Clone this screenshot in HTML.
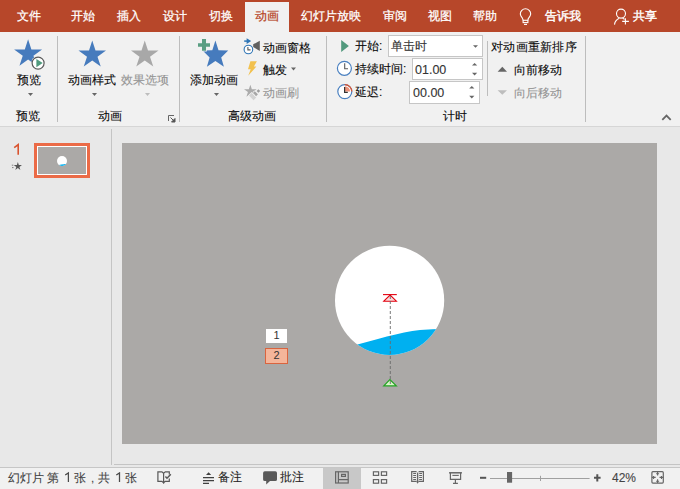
<!DOCTYPE html>
<html><head><meta charset="utf-8">
<style>
*{margin:0;padding:0;box-sizing:border-box}
html,body{width:680px;height:489px;overflow:hidden;background:#E8E8E8;font-family:"Liberation Sans",sans-serif;}
#tabs{position:absolute;left:0;top:0;width:680px;height:32px;background:#B7472A;}
.t{position:absolute;top:9px;font-size:12px;color:#fff;line-height:14px;white-space:nowrap;}
#act{position:absolute;left:245px;top:2px;width:44px;height:30px;background:#F1F1F1;}
#ribbon{position:absolute;left:0;top:32px;width:680px;height:95px;background:#F1F1F1;border-bottom:1px solid #D6D6D6;}
.r{position:absolute;font-size:12px;color:#0a0a0a;line-height:14px;white-space:nowrap;}
.g{color:#949494;}
.box{position:absolute;background:#fff;border:1px solid #C6C6C6;}
#pane{position:absolute;left:0;top:127px;width:680px;height:340px;background:#E8E8E8;}
#status{position:absolute;left:0;top:467px;width:680px;height:22px;background:#F1F1F1;border-top:1px solid #C6C6C6;}
.s{position:absolute;font-size:12px;color:#444;line-height:14px;white-space:nowrap;}
svg.ov{position:absolute;left:0;top:0;}
.r,.s{-webkit-text-stroke:0.1px currentColor;}
.t{-webkit-text-stroke:0.25px currentColor;}
</style></head><body>
<div id="tabs">
  <div class="t" style="left:17px">文件</div>
  <div class="t" style="left:71px">开始</div>
  <div class="t" style="left:117px">插入</div>
  <div class="t" style="left:163px">设计</div>
  <div class="t" style="left:209px">切换</div>
  <div id="act"></div>
  <div class="t" style="left:255px;color:#B7472A">动画</div>
  <div class="t" style="left:301px">幻灯片放映</div>
  <div class="t" style="left:383px">审阅</div>
  <div class="t" style="left:428px">视图</div>
  <div class="t" style="left:473px">帮助</div>
  <div class="t" style="left:545px;-webkit-text-stroke:0.4px #fff">告诉我</div>
  <div class="t" style="left:633px;-webkit-text-stroke:0.4px #fff">共享</div>
</div>
<div id="ribbon"></div>
<div id="pane"></div>
<div id="status"></div>

<!-- ribbon text -->
<div class="r" style="left:17px;top:73px">预览</div>
<div class="r" style="left:16px;top:109px">预览</div>
<div class="r" style="left:68px;top:73px">动画样式</div>
<div class="r g" style="left:121px;top:73px">效果选项</div>
<div class="r" style="left:98px;top:109px">动画</div>
<div class="r" style="left:190px;top:73px">添加动画</div>
<div class="r" style="left:263px;top:41px">动画窗格</div>
<div class="r" style="left:263px;top:62.5px">触发</div>
<div class="r g" style="left:263px;top:85.5px">动画刷</div>
<div class="r" style="left:228px;top:109px">高级动画</div>
<div class="r" style="left:355px;top:39px">开始:</div>
<div class="r" style="left:355px;top:62px">持续时间:</div>
<div class="r" style="left:355px;top:85px">延迟:</div>
<div class="box" style="left:388px;top:35px;width:95px;height:22px"></div>
<div class="r" style="left:391px;top:39px;color:#333">单击时</div>
<div class="box" style="left:412px;top:58px;width:71px;height:22px"></div>
<div class="r" style="left:415px;top:63px;color:#333;font-size:12.5px">01.00</div>
<div class="box" style="left:409px;top:81px;width:71px;height:23px"></div>
<div class="r" style="left:413px;top:86px;color:#333;font-size:12.5px">00.00</div>
<div class="r" style="left:443px;top:109px">计时</div>
<div class="r" style="left:491px;top:40px;letter-spacing:0.3px">对动画重新排序</div>
<div class="r" style="left:514px;top:63px">向前移动</div>
<div class="r g" style="left:514px;top:86px">向后移动</div>


<!-- pane -->
<div style="position:absolute;left:111px;top:129px;width:1px;height:336px;background:#C4C4C4"></div><div style="position:absolute;left:114px;top:464px;width:566px;height:1px;background:#C4C4C4"></div>

<div style="position:absolute;left:34px;top:143px;width:56px;height:35px;border:3px solid #EB6B47;background:#fff;"></div>
<div style="position:absolute;left:38px;top:147px;width:48px;height:27px;background:#ABA9A7;"></div>
<div style="position:absolute;left:122px;top:143px;width:535px;height:301px;background:#ABA9A7;"></div>
<div style="position:absolute;left:266px;top:329px;width:21px;height:14px;background:#fff;"></div>
<div style="position:absolute;left:265px;top:348px;width:23px;height:16px;background:#F4B59A;border:1px solid #D9643F"></div>
<div style="position:absolute;left:266px;top:329px;width:21px;font-size:11px;line-height:13px;text-align:center;color:#333">1</div>
<div style="position:absolute;left:265px;top:349px;width:23px;font-size:11px;line-height:13px;text-align:center;color:#333">2</div>
<svg class="ov" width="680" height="489" viewBox="0 0 680 489">
  <path d="M14.2 147.6 L18.2 144.6 V154.7" fill="none" stroke="#D9542F" stroke-width="1.6" stroke-linejoin="miter"/><path d="M11.8 165.2h1.5M12 167.6h1.5" stroke="#777" stroke-width="0.9"/>
  <path d="M17.85 162.10 L18.82 165.07 L21.94 165.07 L19.41 166.91 L20.38 169.88 L17.85 168.04 L15.32 169.88 L16.29 166.91 L13.76 165.07 L16.88 165.07Z" fill="#555"/>
  <defs><clipPath id="cc"><circle cx="389.6" cy="300.4" r="54.6"/></clipPath>
  <clipPath id="tc"><circle cx="62" cy="161" r="5"/></clipPath></defs>
  <circle cx="389.6" cy="300.4" r="54.6" fill="#fff"/>
  <path d="M350 346.5 C375 340 400 332 420 330 C430 329.3 440 329 450 328.7 L450 360 L350 360Z" fill="#00B0F0" clip-path="url(#cc)"/>
  <circle cx="62" cy="161" r="5" fill="#fff"/>
  <path d="M56 165.8 C59 165 62 164.2 68 163.6 L68 168 L56 168Z" fill="#00B0F0" clip-path="url(#tc)"/>
  
  <path d="M383.8 301.2 L390.1 295 L396.4 301.2Z" fill="#F3C4C4" fill-opacity="0.6" stroke="#E3000F" stroke-width="1.1"/><path d="M383 294.6h13.8" stroke="#E3000F" stroke-width="1.1"/>
  <path d="M383.8 385.9 L389.9 379.6 L396.3 385.9Z" fill="#D9F7C9" stroke="#22A322" stroke-width="1.2"/>
  <path d="M390.3 296V386" stroke="#6A6A6A" stroke-width="0.9" stroke-dasharray="3 2"/>
</svg>

<!-- status text -->
<div class="s" style="left:8px;top:471px;font-size:11.5px">幻灯片</div>
<div class="s" style="left:47px;top:471px;font-size:11.5px">第</div>
<div class="s" style="left:74px;top:471px;font-size:11.5px">张</div>
<div class="s" style="left:91px;top:471px;font-size:11.5px">,</div>
<div class="s" style="left:98px;top:471px;font-size:11.5px">共</div>
<div class="s" style="left:125px;top:471px;font-size:11.5px">张</div>
<div class="s" style="left:218px;top:470px;color:#262626">备注</div>
<div class="s" style="left:280px;top:470px;color:#262626">批注</div>
<div class="s" style="left:612px;top:471px">42%</div>

<svg class="ov" width="680" height="489" viewBox="0 0 680 489">
  <!-- tab bar icons -->
  <path d="M522.9 18.9 C521.6 17.2 520.3 15.6 520.3 14 A5.2 5.2 0 0 1 530.7 14 C530.7 15.6 529.4 17.2 528.1 18.9 V20.2" fill="none" stroke="#fff" stroke-width="1.1"/>
  <path d="M522.9 18.9V20.2" stroke="#fff" stroke-width="1.1"/>
  <rect x="523.1" y="20.3" width="4.8" height="2.3" fill="none" stroke="#fff" stroke-width="1.1"/>
  <path d="M524 24.4h3" stroke="#fff" stroke-width="1.1"/>
  <circle cx="621" cy="13.6" r="4.5" fill="none" stroke="#fff" stroke-width="1.1"/>
  <path d="M614.5 24.6 C614.8 21.5 616.8 19.3 619.3 18.2 M622.5 18.2 C623.3 18.5 624 18.9 624.6 19.4" fill="none" stroke="#fff" stroke-width="1.1"/>
  <path d="M625.4 18.2v6.4M622.2 21.4h6.7" stroke="#fff" stroke-width="1.1"/>

  <!-- separators -->
  <g stroke="#BDBDBD" stroke-width="1">
    <path d="M57.5 36V122M179.5 36V122M326.5 36V122M585.5 36V122M487.5 41V96"/>
  </g>
  <!-- preview -->
  <path d="M28.10 39.30 L31.40 49.42 L42.08 49.42 L33.44 55.68 L36.74 65.80 L28.10 59.55 L19.46 65.80 L22.76 55.68 L14.12 49.42 L24.80 49.42Z" fill="#467BBD"/>
  <circle cx="38.1" cy="63.1" r="6.9" fill="#F1F1F1"/>
  <circle cx="38.1" cy="63.1" r="6" fill="#fff" stroke="#5A5A5A" stroke-width="1.2"/>
  <path d="M36.4 58.9 L42.7 63.1 L36.4 67.3 Z" fill="#4F9A7D"/>
  <path d="M28 93h5l-2.5 3z" fill="#666"/>
  <!-- anim styles -->
  <path d="M92.25 40.60 L95.50 50.53 L106.00 50.53 L97.50 56.67 L100.75 66.60 L92.25 60.46 L83.75 66.60 L87.00 56.67 L78.50 50.53 L89.00 50.53Z" fill="#467BBD"/>
  <path d="M144.75 40.60 L148.00 50.53 L158.50 50.53 L150.00 56.67 L153.25 66.60 L144.75 60.46 L136.25 66.60 L139.50 56.67 L131.00 50.53 L141.50 50.53Z" fill="#A8A8A8"/>
  <path d="M92 93h5l-2.5 3z" fill="#666"/>
  <path d="M145 93h5l-2.5 3z" fill="#BDBDBD"/>
  <path d="M168.5 121V115.5H174" fill="none" stroke="#666" stroke-width="1"/><path d="M170.5 117.5 L175 122 M175 118.5V122H171.5Z" fill="#555" stroke="#555" stroke-width="1"/>
  <!-- add animation -->
  <path d="M215.4 40.6 L218.5 50.3 L228.2 50.5 L221.2 57.6 L223.9 66.8 L215.4 61 L206.9 66.8 L209.6 57.6 L202.6 50.5 L212.3 50.3Z" fill="#467BBD"/>
  <path d="M202 39h4v4.2h4v3.6h-4v3.9h-4v-3.9h-4v-3.6h4z" fill="#5A9E82" stroke="#F1F1F1" stroke-width="1.6" paint-order="stroke"/>
  <path d="M214 93h5l-2.5 3z" fill="#666"/>
  <!-- anim pane icon -->
  <path d="M244.2 41.1h4" stroke="#2E75B6" stroke-width="1.5"/>
  <path d="M246.6 38.2 L251.2 41.1 L246.6 44Z" fill="#2E75B6"/>
  <circle cx="248.4" cy="49.5" r="4.3" fill="#fff" stroke="#2E75B6" stroke-width="1.1"/>
  <path d="M247.9 46.9V49.9H250.5" fill="none" stroke="#595959" stroke-width="1.1"/>
  <path d="M253.2 44.3 L259.8 40.8 L259.8 51 L253.2 47.1Z" fill="#5F5F5F"/>
  <!-- trigger -->
  <path d="M250.4 61.2 L256.9 61.2 L253.9 66.5 L256.4 66.5 L248.2 75.8 L250.7 69.2 L248 69.2 Z" fill="#F2C14E"/>
  <path d="M291 67.5h5l-2.5 3z" fill="#666"/>
  <!-- anim painter -->
  <path d="M250.35 84.70 L251.85 89.28 L256.70 89.28 L252.78 92.11 L254.28 96.69 L250.35 93.86 L246.42 96.69 L247.92 92.11 L244.00 89.28 L248.85 89.28Z" fill="#ABABAB"/>
  <g transform="translate(255.3,94) rotate(-45)" stroke="#F1F1F1" stroke-width="1.2" paint-order="stroke">
    <rect x="-5.6" y="-3.4" width="3.7" height="6.6" fill="#D2D2D2"/>
    <rect x="-1" y="-2.3" width="2.6" height="4.4" fill="#A6A6A6"/>
    <rect x="3" y="-1.1" width="2.5" height="2.5" fill="#9C9C9C"/>
  </g>
  <!-- timing icons -->
  <path d="M341.2 40 L348.9 45.9 L341.2 51.9Z" fill="#52997D"/>
  <circle cx="344.4" cy="68.3" r="7" fill="#fff" stroke="#4A80C0" stroke-width="1.2"/>
  <path d="M344.7 63.2V68.8H348" fill="none" stroke="#5A5A5A" stroke-width="1.1"/>
  <circle cx="344.8" cy="91.6" r="7" fill="#fff" stroke="#4A80C0" stroke-width="1.2"/>
  <path d="M344.8 91.6 V86.3 A5.3 5.3 0 0 1 350.1 91.6 Z" fill="#EC9178"/>
  <path d="M344.8 84.6 A7 7 0 0 1 351.8 91.6" fill="none" stroke="#E0532C" stroke-width="1.2"/>
  <path d="M344.6 87.1V92.3H347.8" fill="none" stroke="#333" stroke-width="1.2"/>
  <!-- combo/spin arrows -->
  <path d="M473 45.2h5l-2.5 2.6z" fill="#666"/>
  <path d="M472 65.5h5.2l-2.6-2.6z" fill="#666"/>
  <path d="M472 72.8h5.2l-2.6 2.6z" fill="#666"/>
  <path d="M469.2 88.6h5.2l-2.6-2.6z" fill="#666"/>
  <path d="M469.2 95.8h5.2l-2.6 2.6z" fill="#666"/>
  <!-- reorder arrows -->
  <path d="M497.6 71.8 L502.3 66.8 L507 71.8Z" fill="#666"/>
  <path d="M497.6 90.3 L502.3 94.8 L507 90.3Z" fill="#BDBDBD"/>
  <path d="M662.3 119.8 L666.5 115.6 L670.7 119.8" fill="none" stroke="#666" stroke-width="1.8"/>
</svg>

<div style="position:absolute;left:323px;top:468px;width:38px;height:21px;background:#C8C8C8"></div>
<svg class="ov" width="680" height="489" viewBox="0 0 680 489">
 <g fill="none" stroke="#595959" stroke-width="1.2">
  <path d="M163.6 473.2 L161.9 471.8 H157.9 V481.3 H161.9 L163.6 482.8 M163.6 473.2 L165.3 471.8 H169.3 V474.4 M169.3 478.6 V481.3 H165.3 L163.6 482.8 M163.6 473.2 V483.8"/>
  <path d="M165.4 476.5L167 478.2L170.8 474.3" stroke-width="1.5"/>
 </g>
 <g fill="none" stroke="#404040" stroke-width="1.2">
  <path d="M203 477.6H214M203 480.6H214M203 483.4H209"/>
 </g>
 <path d="M206 475 L208.6 472.2 L211.2 475Z" fill="#404040"/>
 <path d="M264.8 471.2H275.3Q277 471.2 277 472.9V479.4Q277 481.1 275.3 481.1H270L266.2 484.5V481.1H264.8Q263.1 481.1 263.1 479.4V472.9Q263.1 471.2 264.8 471.2Z" fill="#595959"/>
 <g fill="none" stroke="#666" stroke-width="1.2">
  <rect x="335.6" y="471.8" width="12.6" height="11.2"/>
  <path d="M338.4 471.8V483M338.4 479.6H348.2"/>
  <rect x="341.6" y="474.4" width="3.8" height="2"/>
  <rect x="373.4" y="471.8" width="5.2" height="3.6"/>
  <rect x="381.4" y="471.8" width="5.2" height="3.6"/>
  <rect x="373.4" y="479.6" width="5.2" height="3.6"/>
  <rect x="381.4" y="479.6" width="5.2" height="3.6"/>
 </g>
 <g fill="none" stroke="#666" stroke-width="1.2">
  <path d="M416.6 471.6H411.7V481.3H416.6M418.6 471.6H423.4V481.3H418.6"/>
  <path d="M417.6 472.6V482.2" stroke-width="1.4"/>
  <path d="M413.2 473.5H416M413.2 475.5H416M413.2 477.5H416M413.2 479.5H416M419.2 473.5H422M419.2 475.5H422M419.2 477.5H422M419.2 479.5H422" stroke-width="1"/>
 </g>
 <path d="M416.2 481.6L417.6 483.8L419 481.6Z" fill="#666"/>
 <g fill="none" stroke="#666" stroke-width="1.2">
  <path d="M449.1 472.8H461.9" stroke-width="1.5"/>
  <path d="M450.4 473V479.4H460.6V473"/>
  <path d="M452.4 475.4H458.8" stroke-width="1.1"/>
  <path d="M455.4 479.4V483M453 483.3H457.9"/>
 </g>
 <path d="M65.2 475 L68.4 472.9 V481.9 M116.3 475 L119.5 472.9 V481.9" fill="none" stroke="#4a4a4a" stroke-width="1.25"/>
 <path d="M480 477.8H486.2" stroke="#555" stroke-width="2"/>
 <path d="M490 478.5H589.6" stroke="#A0A0A0" stroke-width="1"/>
 <path d="M540.5 475.8V481" stroke="#A0A0A0" stroke-width="1"/>
 <rect x="507" y="472" width="5.1" height="10.7" fill="#666"/>
 <path d="M594 477.8H600.6M597.3 474.2V481.4" stroke="#555" stroke-width="2"/>
 <g fill="none" stroke="#666" stroke-width="1.2">
  <rect x="651.9" y="471.7" width="11.4" height="11.4" rx="1"/>
  <path d="M657.6 471.7V475.6M656.1 473.7H659.1M657.6 479.3V483.1M656.1 481.3H659.1M651.9 477.4H655.7M653.6 475.9V478.9M659.5 477.4H663.3M661.5 475.9V478.9" stroke-width="1.1"/>
 </g>
</svg>
</body></html>
